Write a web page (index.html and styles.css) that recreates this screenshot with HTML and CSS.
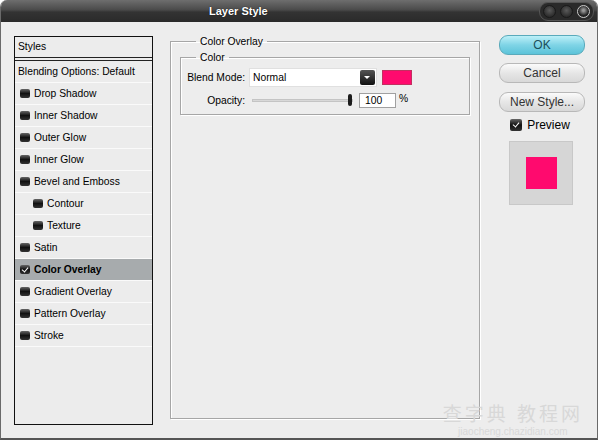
FILE: index.html
```html
<!DOCTYPE html>
<html lang="en">
<head>
  <meta charset="UTF-8">
  <title>Layer Style</title>
  <link rel="stylesheet" href="styles.css">
</head>
<body>

<div class="window">
  <div class="titlebar">
    <span class="title">Layer Style</span>
    <div class="win-btns">
      <span class="dot"></span>
      <span class="dot"></span>
      <span class="dot active"></span>
    </div>
  </div>

  <div class="content">
    <div class="styles-list">
      <div class="row head">Styles</div>
      <div class="row">Blending Options: Default</div>
      <div class="row"><span class="chk"></span>Drop Shadow</div>
      <div class="row"><span class="chk"></span>Inner Shadow</div>
      <div class="row"><span class="chk"></span>Outer Glow</div>
      <div class="row"><span class="chk"></span>Inner Glow</div>
      <div class="row"><span class="chk"></span>Bevel and Emboss</div>
      <div class="row sub"><span class="chk"></span>Contour</div>
      <div class="row sub"><span class="chk"></span>Texture</div>
      <div class="row"><span class="chk"></span>Satin</div>
      <div class="row selected"><span class="chk on"></span>Color Overlay</div>
      <div class="row"><span class="chk"></span>Gradient Overlay</div>
      <div class="row"><span class="chk"></span>Pattern Overlay</div>
      <div class="row"><span class="chk"></span>Stroke</div>
    </div>

    <fieldset class="group outer">
      <legend>Color Overlay</legend>
      <fieldset class="group inner">
        <legend>Color</legend>
        <div class="field">
          <label>Blend Mode:</label>
          <div class="select">
            <span>Normal</span>
            <span class="drop"></span>
          </div>
          <span class="swatch"></span>
        </div>
        <div class="field">
          <label>Opacity:</label>
          <div class="slider"><span class="thumb"></span></div>
          <div class="num">100</div>
          <span class="pct">%</span>
        </div>
      </fieldset>
    </fieldset>

    <div class="side">
      <button class="btn ok">OK</button>
      <button class="btn">Cancel</button>
      <button class="btn">New Style...</button>
      <div class="preview-chk"><span class="chk on"></span>Preview</div>
      <div class="preview"><span class="sample"></span></div>
    </div>
  </div>

  <div class="watermark">
    <div class="wm-big">查字典 教程网</div>
    <div class="wm-small">jiaocheng.chazidian.com</div>
  </div>
</div>

</body>
</html>
```

FILE: styles.css
```css
* {
  margin: 0;
  padding: 0;
  box-sizing: border-box;
}

body {
  background: #fff;
  font-family: Tahoma, "Liberation Sans", "Noto Sans CJK SC", sans-serif;
  font-size: 10.3px;
  color: #000;
}

.window {
  position: relative;
  width: 598px;
  height: 440px;
  background: #ededed;
  border-left: 1px solid #6a6a6a;
  border-right: 1px solid #6a6a6a;
  border-bottom: 2px solid #555;
  border-radius: 7px 7px 0 0;
  overflow: hidden;
}

.titlebar {
  height: 22px;
  display: flex;
  align-items: center;
  background: linear-gradient(#6e6e6e, #4a4a4a 45%, #333 55%, #2a2a2a);
  color: #fff;
}

.title {
  margin-left: 208px;
  font-weight: bold;
  font-size: 11px;
  text-shadow: 0 0 1px #000;
}

.win-btns {
  margin-left: auto;
  margin-right: 3px;
  display: flex;
  gap: 4px;
  padding: 2px 3px;
  background: #2a2a2a;
  border: 1px solid #555;
  border-radius: 9px;
}

.dot {
  width: 13px;
  height: 13px;
  border-radius: 50%;
  background: radial-gradient(circle at 50% 40%, #5a5a5a, #2d2d2d 70%);
  border: 1px solid #1a1a1a;
}

.dot.active {
  background: radial-gradient(circle at 50% 40%, #999 10%, #222 60%);
  border-color: #ccc;
}

.content {
  display: flex;
  padding: 14px 0 0 13px;
}

/* styles list */
.styles-list {
  width: 139px;
  height: 389px;
  border: 1px solid #111;
  background: #ececec;
}

.row {
  height: 22px;
  display: flex;
  align-items: center;
  padding-left: 3px;
  border-bottom: 1px solid #fafafa;
  white-space: nowrap;
}

.row.head {
  height: 24px;
  padding-bottom: 2px;
  border-bottom: 4px double #222;
}

.row.sub {
  padding-left: 16px;
}

.row.selected {
  background: #a7abad;
  font-weight: bold;
}

.chk {
  display: inline-block;
  width: 10px;
  height: 9px;
  margin: 0 4px 0 2px;
  border-radius: 2px;
  background: linear-gradient(#666, #111 50%, #333);
  position: relative;
}

.chk.on::after {
  content: "";
  position: absolute;
  left: 3px;
  top: 1px;
  width: 3px;
  height: 5px;
  border: solid #fff;
  border-width: 0 1px 1px 0;
  transform: rotate(40deg);
}

/* group boxes */
.group {
  border: 1px solid #a6a6a6;
  box-shadow: 1px 1px 0 #fff, inset 1px 1px 0 #fff;
}

.group legend {
  padding: 0 4px;
}

.outer {
  width: 310px;
  height: 383px;
  margin: 0 0 0 17px;
  padding: 5px 9px 0 9px;
}

.outer > legend {
  margin-left: 16px;
}

.inner {
  height: 63px;
  padding: 3px 6px 0 3px;
}

.inner > legend {
  margin-left: 12px;
}

.field {
  display: flex;
  align-items: center;
  height: 23px;
}

.field label {
  width: 65px;
  text-align: right;
  padding-right: 4px;
  white-space: nowrap;
  flex: none;
}

.select {
  width: 128px;
  height: 19px;
  background: #fff;
  border: 1px solid #e0e0e0;
  display: flex;
  align-items: center;
  justify-content: space-between;
  padding: 0 1px 0 3px;
}

.drop {
  width: 15px;
  height: 15px;
  border-radius: 2px;
  background: linear-gradient(#555, #111);
  position: relative;
}

.drop::after {
  content: "";
  position: absolute;
  left: 4px;
  top: 6px;
  border: 3px solid transparent;
  border-top: 3px solid #fff;
  border-bottom: none;
}

.swatch {
  width: 30px;
  height: 15px;
  margin-left: 5px;
  background: #ff0a6e;
  border: 1px solid #c23060;
}

.slider {
  width: 101px;
  height: 3px;
  margin-left: 3px;
  background: #d8d8d8;
  border: 1px solid #c4c4c4;
  position: relative;
}

.thumb {
  position: absolute;
  right: 0;
  top: -6px;
  width: 4px;
  height: 12px;
  border-radius: 2px;
  background: #1c1c1c;
}

.num {
  width: 37px;
  height: 15px;
  margin-left: 6px;
  background: #fff;
  border: 1px solid #a0a0a0;
  padding-left: 5px;
  line-height: 13px;
}

.pct {
  margin-left: 3px;
  margin-top: -4px;
}

/* right column */
.side {
  width: 86px;
  margin-left: 19px;
  margin-top: -1px;
  display: flex;
  flex-direction: column;
  align-items: center;
}

.btn {
  width: 86px;
  height: 20px;
  margin-bottom: 8px;
  font: inherit;
  font-size: 12px;
  color: #333;
  border: 1px solid #b8b8b8;
  border-radius: 9px;
  background: linear-gradient(#fbfbfb, #e6e6e6 50%, #d8d8d8);
}

.btn.ok {
  border-color: #5aaabb;
  background: linear-gradient(#bdf0f8, #7fd4e6 50%, #5cc3d9);
  color: #1b4e5a;
}

.btn + .btn + .btn {
  margin-top: 1px;
  margin-bottom: 6px;
}

.preview-chk {
  display: flex;
  align-items: center;
  font-size: 12px;
  margin-left: -6px;
}

.preview-chk .chk {
  width: 12px;
  height: 12px;
  margin-right: 5px;
}

.preview-chk .chk.on::after {
  left: 4px;
  top: 2px;
}

.preview {
  width: 64px;
  height: 64px;
  margin: 9px 0 0 -2px;
  background: #d6d6d6;
  border: 1px solid #c8c8c8;
  display: flex;
  align-items: center;
  justify-content: center;
}

.sample {
  width: 31px;
  height: 32px;
  background: #ff0a6e;
}

.watermark {
  position: absolute;
  right: 14px;
  bottom: 1px;
  text-align: center;
  color: #d8d8d8;
}

.wm-big {
  font-size: 19px;
  letter-spacing: 3px;
}

.wm-small {
  font-size: 10px;
}
```
